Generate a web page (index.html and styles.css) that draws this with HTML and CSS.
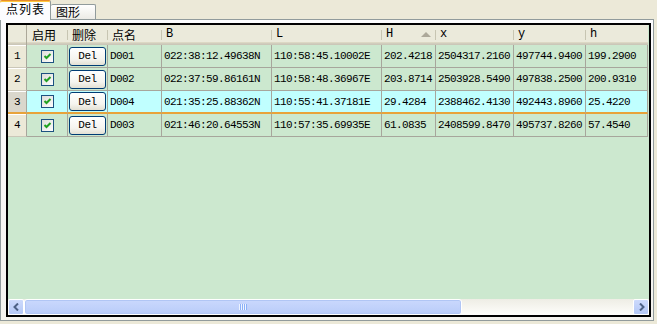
FILE: index.html
```html
<!DOCTYPE html>
<html lang="zh-CN">
<head>
    <meta charset="UTF-8">
    <title>点列表</title>
    <link rel="stylesheet" href="styles.css">
</head>
<body>
    <div class="tabs">
        <div class="tab active">点列表</div>
        <div class="tab">图形</div>
    </div>

    <div class="tab-page">
        <div class="grid">
            <table class="points">
                <thead>
                    <tr>
                        <th class="corner"></th>
                        <th class="c-enable">启用</th>
                        <th class="c-del">删除</th>
                        <th class="c-name">点名</th>
                        <th class="c-b latin">B</th>
                        <th class="c-l latin">L</th>
                        <th class="c-hh latin"><div class="sorted"><span>H</span><span class="sort-up"></span></div></th>
                        <th class="c-x latin">x</th>
                        <th class="c-y latin">y</th>
                        <th class="c-h latin last">h</th>
                    </tr>
                </thead>
                <tbody id="rows"></tbody>
            </table>
            <div class="filler"></div>
            <div class="hscroll">
                <div class="sb-btn">
                    <svg width="7" height="8" viewBox="0 0 7 8"><path d="M5 0.5 L1.5 4 L5 7.5" fill="none" stroke="#4D6185" stroke-width="2"/></svg>
                </div>
                <div class="sb-track">
                    <div class="sb-thumb"><span class="grip"></span></div>
                </div>
                <div class="sb-btn">
                    <svg width="7" height="8" viewBox="0 0 7 8"><path d="M2 0.5 L5.5 4 L2 7.5" fill="none" stroke="#4D6185" stroke-width="2"/></svg>
                </div>
            </div>
        </div>
    </div>

    <script>
        const points = [
            ["D001", "022:38:12.49638N", "110:58:45.10002E", "202.4218", "2504317.2160", "497744.9400", "199.2900"],
            ["D002", "022:37:59.86161N", "110:58:48.36967E", "203.8714", "2503928.5490", "497838.2500", "200.9310"],
            ["D004", "021:35:25.88362N", "110:55:41.37181E", "29.4284", "2388462.4130", "492443.8960", "25.4220"],
            ["D003", "021:46:20.64553N", "110:57:35.69935E", "61.0835", "2408599.8470", "495737.8260", "57.4540"]
        ];
        const currentRow = 2;

        const checkbox = '<svg class="check" width="13" height="13" viewBox="0 0 13 13">' +
            '<defs><linearGradient id="cb" x1="0" y1="0" x2="1" y2="1">' +
            '<stop offset="0" stop-color="#DCDCD7"/><stop offset="1" stop-color="#FFFFFF"/></linearGradient></defs>' +
            '<rect x="0.5" y="0.5" width="12" height="12" fill="url(#cb)" stroke="#1C5180"/>' +
            '<path d="M3.5 6 L5.5 8 L9.5 4" fill="none" stroke="#21A121" stroke-width="2"/></svg>';

        const tbody = document.getElementById('rows');
        points.forEach((p, i) => {
            const tr = document.createElement('tr');
            if (i === currentRow) tr.className = 'current';
            let html = '<td class="rh">' + (i + 1) + '</td>';
            html += '<td class="cb">' + checkbox + '</td>';
            html += '<td class="btn"><button>Del</button></td>';
            p.forEach((v, j) => {
                html += '<td' + (j === p.length - 1 ? ' class="last"' : '') + '>' + v + '</td>';
            });
            tr.innerHTML = html;
            tbody.appendChild(tr);
        });
    </script>
</body>
</html>
```

FILE: styles.css
```css
body {
    margin: 0;
    width: 657px;
    height: 324px;
    overflow: hidden;
    background: #ECE9D8;
    font-family: "Noto Sans CJK SC", sans-serif;
    font-size: 12px;
    color: #000;
}

/* tab strip */
.tabs {
    display: flex;
    align-items: flex-end;
    height: 19px;
    position: relative;
    z-index: 1;
}

.tab {
    box-sizing: border-box;
    width: 45px;
    height: 15px;
    padding-left: 5px;
    line-height: 13px;
    border: 1px solid #919B9C;
    border-bottom: none;
    border-left: none;
    border-radius: 2px 2px 0 0;
    background: linear-gradient(to bottom, #FFFFFF, #ECEBE6);
}

.tab.active {
    width: 51px;
    height: 20px;
    margin-bottom: -1px;
    padding-left: 6px;
    line-height: 16px;
    font-size: 12px;
    letter-spacing: 1px;
    border-top: 1px solid #E68B2C;
    box-shadow: inset 0 1px 0 #FFC73C;
    background: #FCFCFE;
}

/* tab page */
.tab-page {
    box-sizing: border-box;
    width: 654px;
    height: 302px;
    padding: 3px 2px 3px 5px;
    border: 1px solid #919B9C;
    background: linear-gradient(to bottom, #FCFCFE, #F4F3EE);
}

.grid {
    box-sizing: border-box;
    height: 294px;
    border: 2px solid #000;
    background: #CCE8CF;
    display: flex;
    flex-direction: column;
}

.points {
    border-collapse: separate;
    border-spacing: 0;
    table-layout: fixed;
    width: 640px;
}

.points th,
.points td {
    box-sizing: border-box;
    padding: 0;
    white-space: nowrap;
    overflow: hidden;
}

.points th {
    height: 20px;
    padding: 0 0 2px 4px;
    text-align: left;
    font-weight: normal;
    background:
        linear-gradient(#C7C5B2, #C7C5B2) right 0 top 5px / 1px 10px no-repeat,
        linear-gradient(to bottom, #EBEADB 0, #EBEADB 17px, #E2DEC7 17px, #D6D2C2 18px, #CBC7B8 19px);
}

.points th.latin {
    font-family: "Liberation Mono", monospace;
    font-size: 12px;
}

.points th.corner {
    background: linear-gradient(to bottom, #EBEADB 0, #EBEADB 17px, #E2DEC7 17px, #D6D2C2 18px, #CBC7B8 19px);
    border-right: 1px solid #ACA899;
}

.points th.c-enable { padding-left: 5px; }
.points th.last { background: linear-gradient(to bottom, #EBEADB 0, #EBEADB 17px, #E2DEC7 17px, #D6D2C2 18px, #CBC7B8 19px); }

.corner   { width: 19px; }
.c-enable { width: 41px; }
.c-del    { width: 40px; }
.c-name   { width: 54px; }
.c-b      { width: 110px; }
.c-l      { width: 110px; }
.c-hh     { width: 54px; }
.c-x      { width: 78px; }
.c-y      { width: 72px; }
.c-h      { width: 62px; }

.sorted {
    display: flex;
    align-items: center;
    justify-content: space-between;
    padding-right: 5px;
}

.sort-up {
    width: 0;
    height: 0;
    border-left: 5px solid transparent;
    border-right: 5px solid transparent;
    border-bottom: 5px solid #ACA899;
}

.points td {
    height: 23px;
    padding-left: 2px;
    border-right: 1px solid #A7A69C;
    border-bottom: 1px solid #A7A69C;
    background: #CCE8CF;
    font-family: "Liberation Mono", monospace;
    font-size: 11px;
    letter-spacing: -0.6px;
}

.points td.rh {
    padding: 0;
    text-align: center;
    background: #ECE9D8;
    border-bottom-color: #CBC7B8;
    box-shadow: inset 0 1px 0 #FFFFFF;
}

.points td.cb {
    padding-left: 1px;
}

.check {
    display: block;
    margin: 0 auto;
}

.points td.btn {
    padding: 0;
}

.btn button {
    display: block;
    box-sizing: border-box;
    width: 37px;
    height: 19px;
    margin: 0 auto;
    padding: 0;
    border: 1px solid #003C74;
    border-radius: 3px;
    background: linear-gradient(to bottom, #FFFFFF 0, #F5F4EF 65%, #E3E0D4 100%);
    font-family: "Liberation Mono", monospace;
    font-size: 11px;
    letter-spacing: -0.4px;
    color: #000;
}

.points tr.current td {
    height: 23px;
    background: #C0FFFF;
    border-bottom: 2px solid #E8A33A;
}

.points tr.current td.rh {
    background: #DAD7CC;
}

.filler {
    flex: 1;
}

/* horizontal scroll bar */
.hscroll {
    display: flex;
    height: 16px;
    background: linear-gradient(to bottom, #EEEDE5, #FEFEFB);
}

.sb-btn {
    box-sizing: border-box;
    width: 16px;
    height: 16px;
    border: 1px solid #FFFFFF;
    border-radius: 2px;
    background: linear-gradient(to bottom, #CDDAFC, #B4C8F6);
    display: flex;
    align-items: center;
    justify-content: center;
}

.sb-track {
    flex: 1;
    display: flex;
}

.sb-thumb {
    box-sizing: border-box;
    width: 438px;
    height: 16px;
    border: 1px solid #FFFFFF;
    border-radius: 3px;
    background: linear-gradient(to bottom, #CAD8FD, #B9CCF9);
    box-shadow: inset 0 0 0 1px #B1C6F5;
    display: flex;
    align-items: center;
    justify-content: center;
}

.grip {
    width: 8px;
    height: 6px;
    background: repeating-linear-gradient(to right, #EEF4FE 0, #EEF4FE 1px, #8CB0F8 1px, #8CB0F8 2px);
}
```
